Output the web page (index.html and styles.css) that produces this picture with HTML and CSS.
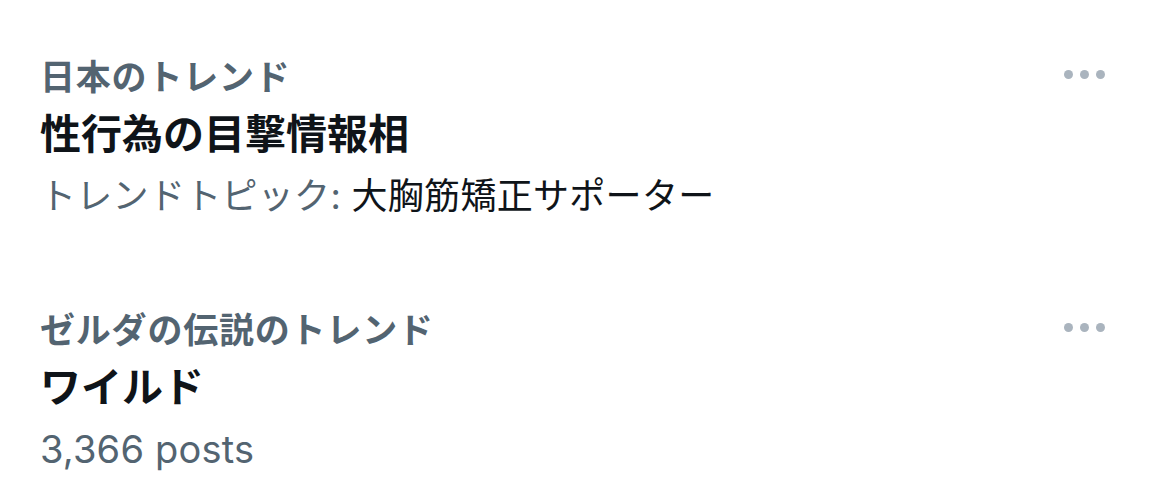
FILE: index.html
```html
<!DOCTYPE html>
<html lang="ja">
<head>
    <meta charset="UTF-8">
    <title>トレンド</title>
    <link rel="stylesheet" href="styles.css">
</head>
<body>
    <div class="trend-list">
        <div class="trend">
            <div class="trend-head">
                <span class="trend-context">日本のトレンド</span>
                <span class="more"><i></i><i></i><i></i></span>
            </div>
            <div class="trend-name">性行為の目撃情報相</div>
            <div class="trend-meta">トレンドトピック: <span class="topic">大胸筋矯正サポーター</span></div>
        </div>
        <div class="trend">
            <div class="trend-head">
                <span class="trend-context">ゼルダの伝説のトレンド</span>
                <span class="more"><i></i><i></i><i></i></span>
            </div>
            <div class="trend-name">ワイルド</div>
            <div class="trend-meta count">3,366 posts</div>
        </div>
    </div>
</body>
</html>
```

FILE: styles.css
```css
body {
    margin: 0;
    background-color: #ffffff;
    font-family: Inter, "Noto Sans CJK JP", sans-serif;
}

.trend-list {
    display: flex;
    flex-direction: column;
    gap: 70px;
    padding: 44px 0 0 40px;
}

.trend {
    display: flex;
    flex-direction: column;
}

.trend-head {
    display: flex;
    justify-content: space-between;
    align-items: center;
    height: 60px;
    padding-right: 65px;
}

.trend-context {
    font-size: 35px;
    font-weight: 600;
    color: #536471;
    letter-spacing: 0.8px;
}

.more {
    display: flex;
    gap: 7px;
}

.more i {
    width: 9px;
    height: 9px;
    border-radius: 50%;
    background-color: #aab4be;
}

.trend-name {
    font-size: 41px;
    font-weight: 700;
    color: #0f1419;
    line-height: 61px;
}

.trend-meta {
    font-size: 36px;
    color: #536471;
    line-height: 62px;
    letter-spacing: 0.3px;
}

.trend-meta.count {
    font-size: 38px;
    letter-spacing: 0.2px;
}

.topic {
    color: #0f1419;
}
```
